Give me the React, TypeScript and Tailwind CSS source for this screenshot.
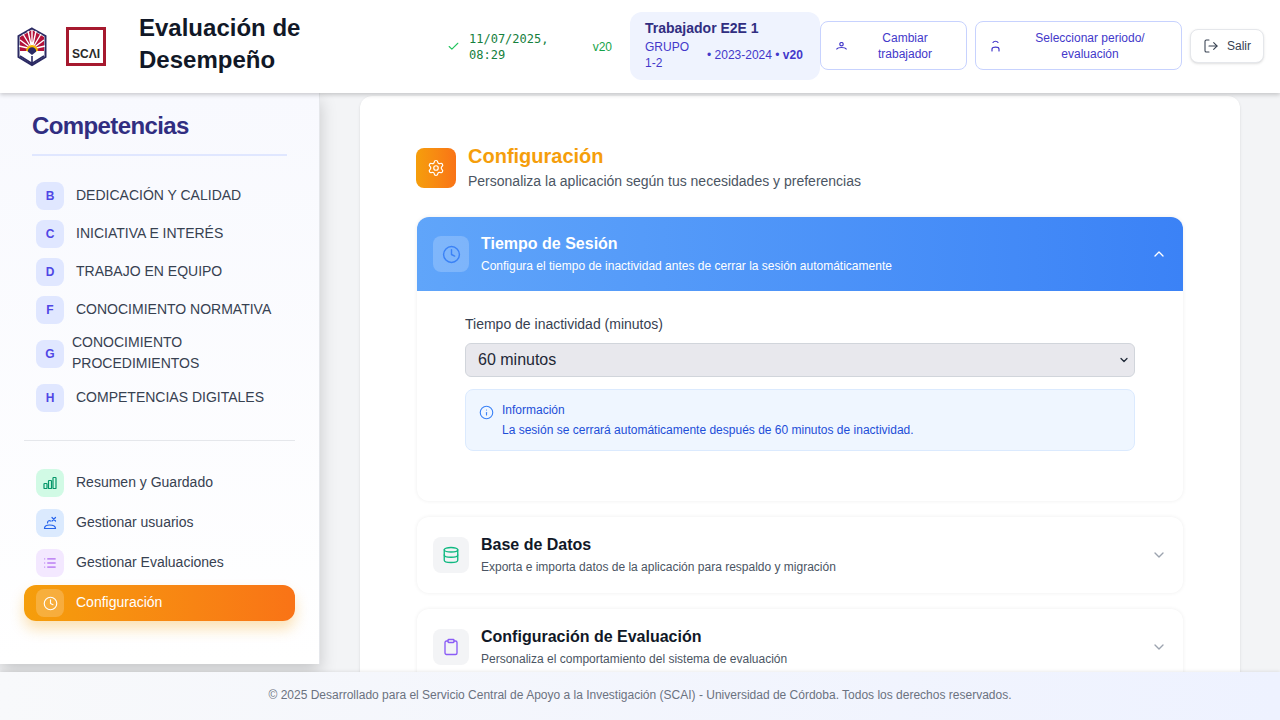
import { Check, ChevronDown, ChevronUp, Clipboard, Clock, Database, Info, List, LogOut, Settings } from "lucide-react";

const competencias = [
  { letter: "B", name: "DEDICACIÓN Y CALIDAD" },
  { letter: "C", name: "INICIATIVA E INTERÉS" },
  { letter: "D", name: "TRABAJO EN EQUIPO" },
  { letter: "F", name: "CONOCIMIENTO NORMATIVA" },
  { letter: "G", name: "CONOCIMIENTO PROCEDIMIENTOS" },
  { letter: "H", name: "COMPETENCIAS DIGITALES" },
];

function UniLogo() {
  return (
    <svg width="30" height="40" viewBox="0 0 30 40">
      <path d="M15 1.5 L28.5 9 V30 L15 38 L1.5 30 V9 Z" fill="#fff" stroke="#2b2a63" strokeWidth="2" />
      <path d="M3 10 L15 3 L27 10 V24 H3 Z" fill="#b3123a" />
      <path d="M15 22 L6 7 M15 22 L11 4 M15 22 L15 3 M15 22 L19 4 M15 22 L24 7 M15 22 L3 13 M15 22 L27 13 M15 22 L2 19 M15 22 L28 19" stroke="#fff" strokeWidth="1.4" />
      <circle cx="15" cy="24" r="6" fill="#f5b800" />
      <circle cx="15" cy="24.5" r="4.2" fill="#2b2a63" />
      <path d="M3 24 H10 L15 28 L20 24 H27 V29 L15 36.5 L3 29 Z" fill="#fff" />
      <path d="M15 29 V37 M3 29 L15 36.5 L27 29" stroke="#2b2a63" strokeWidth="1.6" fill="none" />
    </svg>
  );
}

function ScaiLogo() {
  return (
    <div className="flex h-[39px] w-10 items-end justify-center border-[3px] border-[#a6192e] pb-[3px]">
      <span className="text-[12px] leading-[12px] font-bold text-[#2a2a2a]">SCΛI</span>
    </div>
  );
}

function BarsIcon() {
  return (
    <svg width="14" height="14" viewBox="0 0 14 14" fill="none" stroke="#059669" strokeWidth="1.2">
      <rect x="1" y="7.5" width="3" height="5" rx="0.6" />
      <rect x="5.5" y="4.5" width="3" height="8" rx="0.6" />
      <rect x="10" y="1.5" width="3" height="11" rx="0.6" />
    </svg>
  );
}

function UsersIcon() {
  return (
    <svg width="14" height="14" viewBox="0 0 14 14" fill="none" stroke="#2563eb" strokeWidth="1.2" strokeLinecap="round">
      <path d="M1.5 12.5 C1.5 9.5 3.5 9 6.5 9 C10 9 12.5 9.5 12.5 12.5 Z" />
      <path d="M4.5 7 C4.5 5 6 4 7.5 5" />
      <path d="M9 1.5 L12.5 5 M12.5 1.5 L9 5" />
    </svg>
  );
}

function SwitchUserIcon() {
  return (
    <svg width="11" height="8" viewBox="0 0 11 8" fill="none" stroke="#4338ca" strokeWidth="1.2" strokeLinecap="round" className="shrink-0">
      <circle cx="5.5" cy="2.2" r="1.7" />
      <path d="M0.8 7 C2 5 9 5 10.2 7" />
    </svg>
  );
}

function PeriodIcon() {
  return (
    <svg width="9" height="12" viewBox="0 0 9 12" fill="none" stroke="#4338ca" strokeWidth="1.2" strokeLinecap="round" className="shrink-0">
      <path d="M2 2.5 C2.8 0.8 6.2 0.8 7 2.5" />
      <path d="M1 11 V9 C1 6.5 8 6.5 8 9 V11" />
    </svg>
  );
}

export default function App() {
  return (
    <div className="flex h-screen flex-col overflow-hidden bg-[#f3f4f6] font-['Liberation_Sans',sans-serif] text-[#111827]">
      {/* Header */}
      <header className="relative z-20 flex h-[93px] shrink-0 items-center bg-white pr-4 pl-[17px] shadow-[0_2px_4px_rgba(0,0,0,0.18)]">
        <UniLogo />
        <div className="ml-[19px]"><ScaiLogo /></div>
        <h1 className="mb-[5px] ml-[33px] w-[290px] text-[24px] leading-8 font-bold text-[#111827]">Evaluación de Desempeño</h1>

        <div className="ml-[18px] flex w-[165px] items-center text-xs text-[#16a34a]">
          <Check size={13} strokeWidth={2} className="shrink-0 text-[#22c55e]" />
          <span className="ml-[9px] w-[110px] font-['DejaVu_Sans_Mono',monospace] text-[12px] leading-4 text-[#15803d]">11/07/2025, 08:29</span>
          <span className="ml-[14px]">v20</span>
        </div>

        <div className="mb-[2px] ml-[18px] h-[68px] w-[190px] rounded-xl bg-[#eff3fe] pt-[6px] pr-3 pl-[15px]">
          <div className="text-[14px] leading-5 font-bold text-[#312e81]">Trabajador E2E 1</div>
          <div className="mt-px flex items-center text-xs leading-4 text-[#4338ca]">
            <span className="w-[62px] pr-4">GRUPO 1-2</span>
            <span>• 2023-2024 • <b className="font-bold">v20</b></span>
          </div>
        </div>

        <button className="mb-[2px] flex h-[49px] w-[147px] items-center rounded-lg border border-[#c7d2fe] bg-white px-[15px] text-xs leading-4 text-[#4338ca]">
          <SwitchUserIcon />
          <span className="flex-1 pr-3 pl-6 text-center">Cambiar trabajador</span>
        </button>
        <button className="mb-[2px] ml-2 flex h-[49px] w-[207px] items-center rounded-lg border border-[#c7d2fe] bg-white px-[15px] text-xs leading-4 text-[#4338ca]">
          <PeriodIcon />
          <span className="flex-1 pr-3 pl-[26px] text-center">Seleccionar periodo/ evaluación</span>
        </button>
        <button className="mb-[2px] ml-2 flex h-[34px] w-[74px] items-center justify-center gap-2 rounded-lg border border-[#e5e7eb] bg-white text-xs text-[#374151] shadow-sm">
          <LogOut size={16} strokeWidth={1.6} />
          Salir
        </button>
      </header>

      <div className="flex min-h-0 flex-1 overflow-hidden">
        {/* Sidebar */}
        <aside className="z-10 h-[571px] w-[320px] shrink-0 border-r border-[#e5e7eb] bg-gradient-to-b from-[#f8f9fe] to-white px-6 shadow-[0_8px_16px_rgba(0,0,0,0.18)]">
          <div className="mx-2 mt-[17px] border-b-2 border-[#e0e7ff] pb-[12px]">
            <h2 className="text-[24px] leading-8 font-bold tracking-[-0.6px] text-[#312e81]">Competencias</h2>
          </div>
          <ul className="mt-[21px] flex flex-col border-b border-[#e5e7eb] pb-[23px]">
            {competencias.map((c) => (
              <li key={c.letter} className={c.letter === "G" ? "flex h-[50px] items-center px-3" : "flex h-[38px] items-center px-3"}>
                <span className="flex h-7 w-7 shrink-0 items-center justify-center rounded-lg bg-[#e0e7ff] text-xs font-bold text-[#4f46e5]">{c.letter}</span>
                <span className={c.letter === "G" ? "mb-[2px] ml-2 text-[14px] leading-[21px] text-[#374151]" : "mb-[2px] ml-3 text-[14px] leading-5 text-[#374151]"}>{c.name}</span>
              </li>
            ))}
          </ul>
          <ul className="mt-[28px] flex flex-col gap-3 text-[14px] text-[#374151]">
            <li className="flex h-7 items-center gap-3 px-3">
              <span className="flex h-7 w-7 items-center justify-center rounded-lg bg-[#d1fae5]"><BarsIcon /></span>
              <span className="mb-[2px]">Resumen y Guardado</span>
            </li>
            <li className="flex h-7 items-center gap-3 px-3">
              <span className="flex h-7 w-7 items-center justify-center rounded-lg bg-[#dbeafe]"><UsersIcon /></span>
              <span className="mb-[2px]">Gestionar usuarios</span>
            </li>
            <li className="flex h-7 items-center gap-3 px-3">
              <span className="flex h-7 w-7 items-center justify-center rounded-lg bg-[#f3e8ff]"><List size={14} strokeWidth={1.5} className="text-[#9333ea]" /></span>
              <span className="mb-[2px]">Gestionar Evaluaciones</span>
            </li>
            <li className="-mt-1 flex h-9 items-center gap-3 rounded-xl bg-gradient-to-r from-[#f59e0b] to-[#f97316] px-3 font-medium text-white shadow-[0_8px_14px_rgba(245,158,11,0.3)]">
              <span className="flex h-7 w-7 items-center justify-center rounded-lg bg-white/20"><Clock size={15} strokeWidth={1.8} /></span>
              <span className="mb-[2px]">Configuración</span>
            </li>
          </ul>
        </aside>

        {/* Main */}
        <main className="min-w-0 flex-1 px-10 pt-[3px]">
          <div className="rounded-xl bg-white px-14 pt-[52px] shadow-sm">
            <div className="flex items-start gap-3">
              <span className="flex h-10 w-10 items-center justify-center rounded-lg bg-gradient-to-r from-[#f59e0b] to-[#f97316] text-white">
                <Settings size={18} strokeWidth={1.6} />
              </span>
              <div>
                <h2 className="text-[20px] leading-[17px] font-bold text-[#f59e0b]">Configuración</h2>
                <p className="mt-[6px] mb-px text-[14px] leading-5 text-[#4b5563]">Personaliza la aplicación según tus necesidades y preferencias</p>
              </div>
            </div>

            <section className="mx-px mt-[25px] h-[284px] overflow-hidden rounded-xl bg-white shadow-[0_0_4px_rgba(0,0,0,0.07)]">
              <div className="flex h-[74px] items-center bg-gradient-to-r from-[#60a5fa] to-[#3b82f6] px-4 text-white">
                <span className="flex h-9 w-9 items-center justify-center rounded-lg bg-white/20">
                  <Clock size={19} strokeWidth={1.8} className="text-[#3b82f6]" />
                </span>
                <div className="-mt-[2px] ml-3 flex-1">
                  <div className="text-[16px] leading-6 font-bold">Tiempo de Sesión</div>
                  <div className="mt-[2px] text-xs leading-4">Configura el tiempo de inactividad antes de cerrar la sesión automáticamente</div>
                </div>
                <ChevronUp size={16} />
              </div>
              <div className="px-12 pt-[23px]">
                <label className="block text-[14px] leading-5 text-[#374151]">Tiempo de inactividad (minutos)</label>
                <div className="mt-[9px] flex h-[34px] items-center justify-between rounded-md border border-[#d1d5db] bg-[#e8e8ed] pr-[4px] pl-3 text-[16px] text-[#1f2937]">
                  60 minutos
                  <ChevronDown size={12} strokeWidth={2.5} />
                </div>
                <div className="mt-3 flex h-[62px] gap-2 rounded-lg border border-[#dbeafe] bg-[#eff6ff] px-[13px] pt-3">
                  <Info size={15} strokeWidth={1.8} className="mt-[3px] shrink-0 text-[#3b82f6]" />
                  <div className="text-xs leading-4 text-[#1d4ed8]">
                    <div>Información</div>
                    <div className="mt-1">La sesión se cerrará automáticamente después de 60 minutos de inactividad.</div>
                  </div>
                </div>
              </div>
            </section>

            <section className="mx-px mt-4 flex h-[76px] items-center rounded-xl bg-white px-4 shadow-[0_0_4px_rgba(0,0,0,0.07)]">
              <span className="flex h-9 w-9 items-center justify-center rounded-lg bg-[#f3f4f6]">
                <Database size={18} strokeWidth={1.8} className="text-[#10b981]" />
              </span>
              <div className="-mt-[3px] ml-3 flex-1">
                <div className="text-[16px] leading-6 font-bold text-[#111827]">Base de Datos</div>
                <div className="mt-[2px] text-xs leading-4 text-[#4b5563]">Exporta e importa datos de la aplicación para respaldo y migración</div>
              </div>
              <ChevronDown size={16} className="text-[#9ca3af]" />
            </section>

            <section className="mx-px mt-4 flex h-[76px] items-center rounded-xl bg-white px-4 shadow-[0_0_4px_rgba(0,0,0,0.07)]">
              <span className="flex h-9 w-9 items-center justify-center rounded-lg bg-[#f3f4f6]">
                <Clipboard size={18} strokeWidth={1.8} className="text-[#8b5cf6]" />
              </span>
              <div className="-mt-[3px] ml-3 flex-1">
                <div className="text-[16px] leading-6 font-bold text-[#111827]">Configuración de Evaluación</div>
                <div className="mt-[2px] text-xs leading-4 text-[#4b5563]">Personaliza el comportamiento del sistema de evaluación</div>
              </div>
              <ChevronDown size={16} className="text-[#9ca3af]" />
            </section>
          </div>
        </main>
      </div>

      {/* Footer */}
      <footer className="relative z-20 flex h-[48px] shrink-0 items-center justify-center bg-gradient-to-r from-[#f8f9fb] to-[#eef2ff] pb-[2px] text-xs text-[#6b7280] shadow-[0_-1px_3px_rgba(0,0,0,0.08)]">
        © 2025 Desarrollado para el Servicio Central de Apoyo a la Investigación (SCAI) - Universidad de Córdoba. Todos los derechos reservados.
      </footer>
    </div>
  );
}
